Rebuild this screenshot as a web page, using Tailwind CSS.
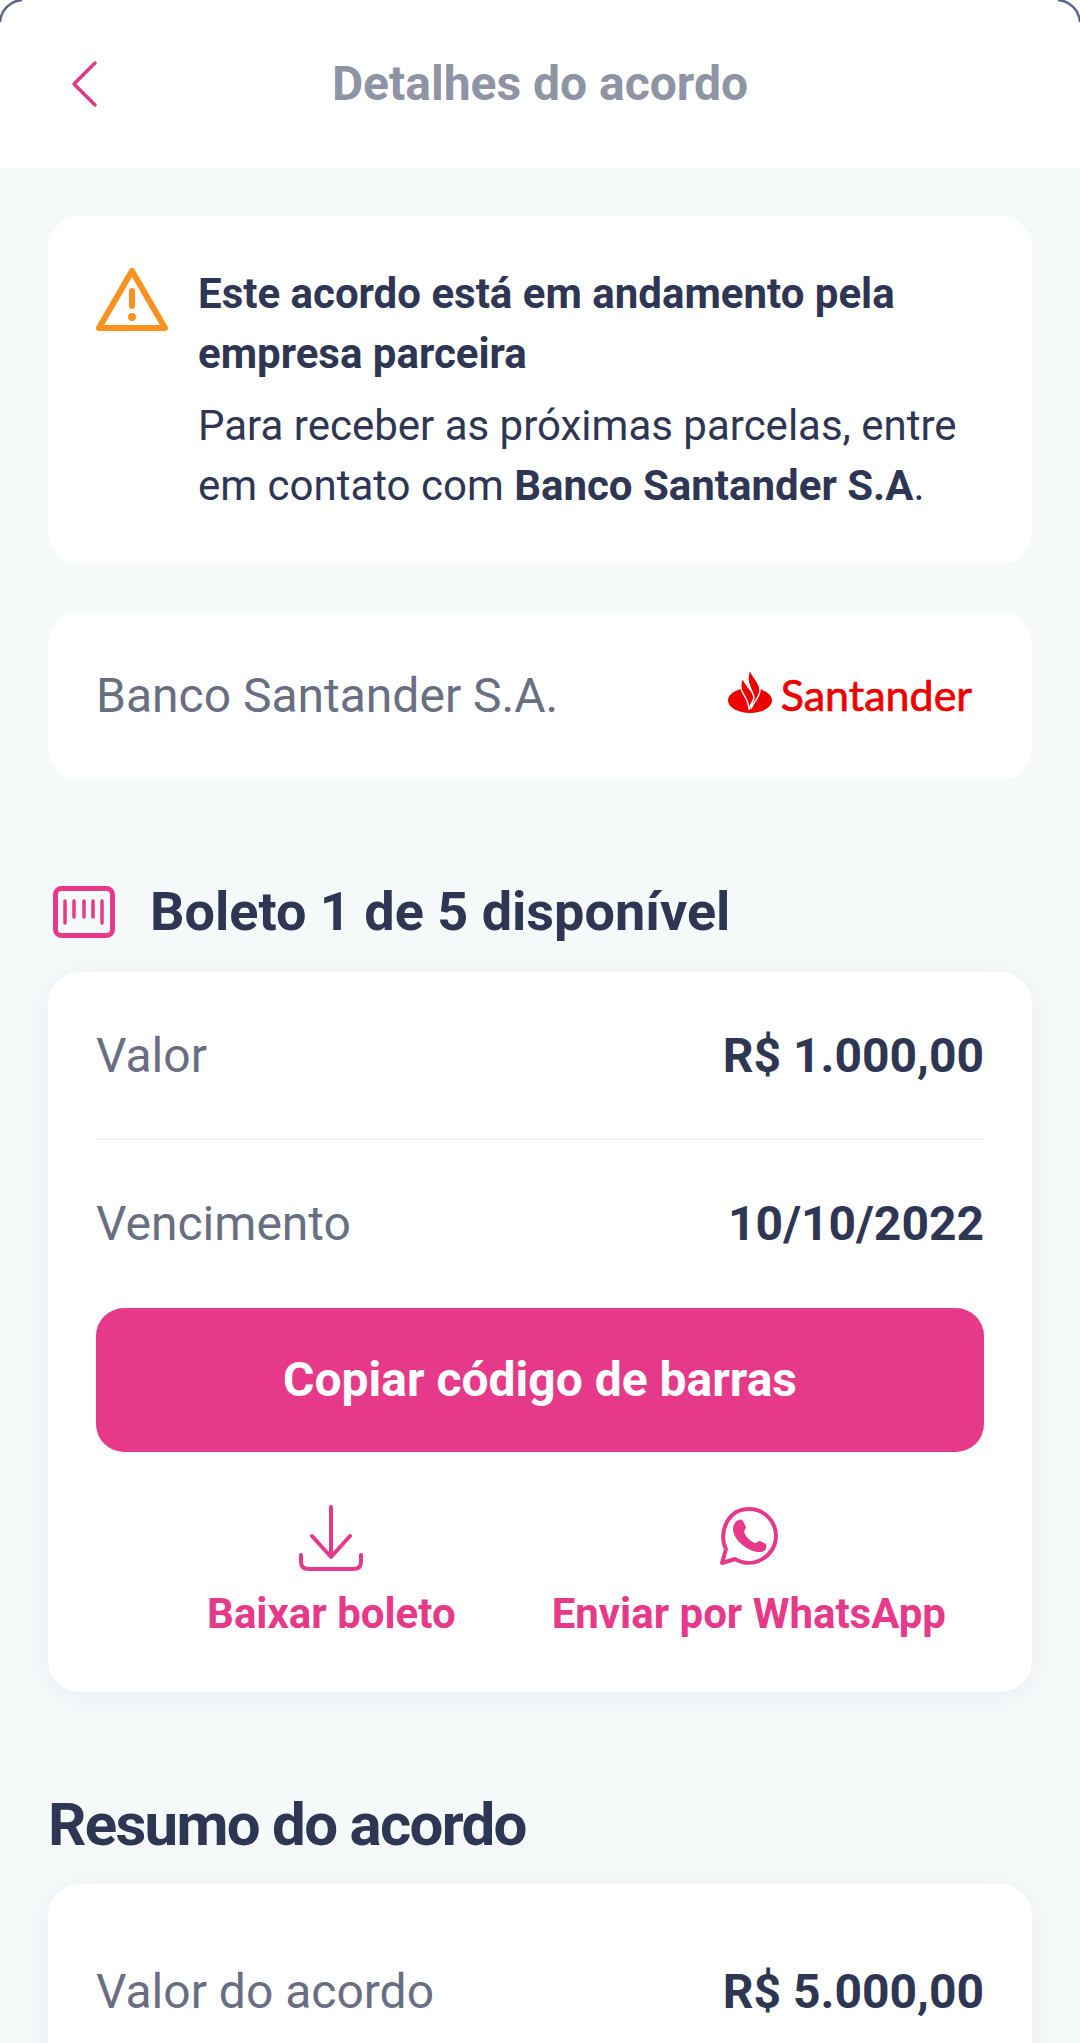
<!DOCTYPE html>
<html lang="pt-BR">
<head>
    <meta charset="UTF-8">
    <title>Detalhes do acordo</title>
    <script src="https://cdn.jsdelivr.net/npm/@tailwindcss/browser@4"></script>
</head>
<body class="bg-[#f5f9fa]">
<div class="relative w-[1080px] h-[2043px] overflow-hidden bg-[#f5f9fa] font-['Roboto',sans-serif] text-[#2f3654]">
    <!-- Header -->
    <header class="relative h-[168px] bg-white flex items-center justify-center">
        <svg class="absolute left-[68px] top-[60px]" width="32" height="48" viewBox="0 0 32 48" fill="none">
            <path d="M27 3 L6 24 L27 45" stroke="#e03a87" stroke-width="3.5" stroke-linecap="round" stroke-linejoin="round"/>
        </svg>
        <h1 class="text-[48px] leading-[60px] font-bold text-[#8f93a3]">Detalhes do acordo</h1>
    </header>

    <main class="px-12 pt-12 flex flex-col">
        <!-- Aviso -->
        <section class="h-[348px] rounded-[32px] bg-white pt-12 pl-12 pr-10 flex gap-[30px]">
            <svg class="mt-[3px] shrink-0" width="72" height="66" viewBox="0 0 72 66" fill="none">
                <path d="M36 4 L69 61 L3 61 Z" stroke="#fb9220" stroke-width="6" stroke-linejoin="round"/>
                <path d="M36 24 V39" stroke="#fb9220" stroke-width="6" stroke-linecap="round"/>
                <circle cx="36" cy="50" r="4" fill="#fb9220"/>
            </svg>
            <div class="text-[42px] leading-[60px]">
                <p class="font-bold">Este acordo está em andamento pela empresa parceira</p>
                <p class="mt-3">Para receber as próximas parcelas, entre em contato com <b class="font-bold">Banco Santander S.A</b>.</p>
            </div>
        </section>

        <!-- Empresa -->
        <section class="mt-12 h-[168px] rounded-[32px] bg-white pl-12 pr-[60px] flex items-center justify-between">
            <span class="text-[48px] text-[#6a6e82]">Banco Santander S.A.</span>
            <div class="mt-[-3px] flex items-center gap-[9px] text-[#ec0000]">
                <svg class="mt-[-8px]" width="44" height="44" viewBox="0 0 44 42" preserveAspectRatio="none">
                    <ellipse cx="22" cy="30" rx="22" ry="12" fill="#ec0000"/>
                    <path d="M22 0 C24 8 32 12 32 20 C32 27 26 30 23 38 C25 30 26 24 22 17 C19 12 20 5 22 0 Z" fill="#ec0000" stroke="#fff" stroke-width="1.4"/>
                    <path d="M15 8 C16 15 25 20 26 27 C26 31 22 33 21 39 C21 32 18 28 15 23 C12 19 12 13 15 8 Z" fill="#ec0000" stroke="#fff" stroke-width="1.4"/>
                </svg>
                <span class="font-['Lato',sans-serif] text-[43px] leading-none [-webkit-text-stroke:0.7px_#ec0000]">Santander</span>
            </div>
        </section>

        <!-- Boleto -->
        <div class="mt-[102px] h-[60px] flex items-center gap-[35px] pl-[5px]">
            <svg width="62" height="52" viewBox="0 0 62 52" fill="none" stroke="#e6398a" stroke-linecap="round">
                <rect x="2.5" y="2.5" width="57" height="47" rx="6" stroke-width="5"/>
                <path d="M12 15 V37 M21 15 V31 M31 15 V31 M40 15 V31 M49 15 V37" stroke-width="3.5"/>
            </svg>
            <h2 class="text-[54px] leading-[60px] font-bold">Boleto 1 de 5 disponível</h2>
        </div>

        <section class="mt-[30px] h-[720px] rounded-[32px] bg-white shadow-[0_4px_24px_rgba(47,54,84,0.06)] px-12">
            <div class="h-[168px] pt-[2px] flex items-center justify-between border-b-2 border-[#eff2f4]">
                <span class="text-[48px] text-[#6a6e82]">Valor</span>
                <span class="text-[48px] font-bold">R$ 1.000,00</span>
            </div>
            <div class="h-[168px] flex items-center justify-between">
                <span class="text-[48px] text-[#6a6e82]">Vencimento</span>
                <span class="text-[48px] font-bold">10/10/2022</span>
            </div>
            <button class="w-full h-[144px] rounded-[28px] bg-[#e6398a] text-white text-[48px] font-bold">Copiar código de barras</button>
            <div class="mt-[52px] flex justify-end gap-[96px] pr-[38px] text-[#e6398a] text-[42px] font-bold">
                <div class="flex flex-col items-center">
                    <svg width="68" height="68" viewBox="0 0 68 68" fill="none" stroke="#e6398a" stroke-width="4" stroke-linecap="round" stroke-linejoin="round">
                        <path d="M34 3 V52 M15 32 L34 53 L53 32"/>
                        <path d="M4 51 V58 C4 63 7 65 12 65 H56 C61 65 64 63 64 58 V51"/>
                    </svg>
                    <span class="mt-[15px] leading-[54px]">Baixar boleto</span>
                </div>
                <div class="flex flex-col items-center">
                    <svg class="mt-[2px]" width="60" height="60" viewBox="0 0 60 60" fill="none">
                        <path d="M3 57 L7 43 C-1 28 8 3 30 3 C45 3 57 15 57 30 C57 50 34 64 16 53 Z" stroke="#e6398a" stroke-width="4" stroke-linejoin="round"/>
                        <path d="M20 14 C23 13 24 14 25 17 L27 21 C27 23 25 24 25 26 C27 31 31 35 36 37 C38 37 39 35 41 35 L47 38 C48 42 47 45 42 46 C30 47 14 34 14 23 C14 19 16 15 20 14 Z" fill="#e6398a"/>
                    </svg>
                    <span class="mt-[21px] leading-[54px]">Enviar por WhatsApp</span>
                </div>
            </div>
        </section>

        <!-- Resumo -->
        <h2 class="mt-[102px] text-[60px] leading-[62px] font-bold tracking-[-1.7px]">Resumo do acordo</h2>
        <section class="mt-[28px] h-[300px] rounded-[32px] bg-white shadow-[0_4px_24px_rgba(47,54,84,0.06)] px-12">
            <div class="h-[216px] flex items-center justify-between">
                <span class="text-[48px] text-[#6a6e82]">Valor do acordo</span>
                <span class="text-[48px] font-bold">R$ 5.000,00</span>
            </div>
        </section>
    </main>

    <!-- Cantos da tela -->
    <svg class="absolute left-0 top-0" width="30" height="30" viewBox="0 0 30 30" fill="none">
        <path d="M0 22 C1 10 10 1 22 0" stroke="#5a6488" stroke-width="2.5"/>
    </svg>
    <svg class="absolute right-0 top-0" width="30" height="30" viewBox="0 0 30 30" fill="none">
        <path d="M30 22 C29 10 20 1 8 0" stroke="#5a6488" stroke-width="2.5"/>
    </svg>
</div>
</body>
</html>
